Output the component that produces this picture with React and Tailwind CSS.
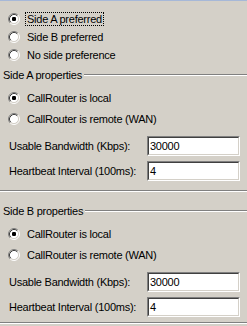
import React from "react";

function Radio({ checked }) {
  return (
    <svg width="12" height="12" viewBox="0 0 12 12" className="shrink-0">
      <circle cx="6" cy="6" r="4.5" fill="#ffffff" />
      <path d="M2.11 9.89 A5.5 5.5 0 0 1 9.89 2.11" fill="none" stroke="#808080" strokeWidth="1" />
      <path d="M2.82 9.18 A4.5 4.5 0 0 1 9.18 2.82" fill="none" stroke="#404040" strokeWidth="1" />
      <path d="M9.89 2.11 A5.5 5.5 0 0 1 2.11 9.89" fill="none" stroke="#ffffff" strokeWidth="1" />
      <path d="M9.18 2.82 A4.5 4.5 0 0 1 2.82 9.18" fill="none" stroke="#d4d0c8" strokeWidth="1" />
      {checked && <rect x="4" y="4" width="4" height="4" rx="1.2" fill="#000000" />}
    </svg>
  );
}

function RadioRow({ checked, focused, label, h }) {
  return (
    <div className={`flex items-center ${h}`}>
      <div className="ml-[8px] mr-[5px] flex">
        <Radio checked={checked} />
      </div>
      <span
        className={`border px-px leading-[12px] ${
          focused ? "border-dotted border-black" : "border-transparent"
        }`}
      >
        {label}
      </span>
    </div>
  );
}

function GroupHeader({ label }) {
  return (
    <div className="flex h-[20px] items-center">
      <span className="ml-[3px] leading-[12px]">{label}</span>
      <div className="ml-[2px] flex flex-1 flex-col">
        <div className="h-px bg-[#808080]" />
        <div className="h-px bg-white" />
      </div>
    </div>
  );
}

function Field({ label, value }) {
  return (
    <div className="flex h-[20px] items-center">
      <span className="ml-[9px] w-[138px] leading-[12px]">{label}</span>
      <div className="h-[20px] w-[93px] border border-t-[#808080] border-l-[#808080] border-b-white border-r-white">
        <div className="flex h-full items-center border border-t-[#404040] border-l-[#404040] border-b-[#d4d0c8] border-r-[#d4d0c8] bg-white pl-[1px] leading-[12px]">
          {value}
        </div>
      </div>
    </div>
  );
}

function Group({ label }) {
  return (
    <div className="flex flex-col">
      <GroupHeader label={label} />
      <div className="pt-[2px]">
        <RadioRow checked label="CallRouter is local" h="h-[21px]" />
        <RadioRow label="CallRouter is remote (WAN)" h="h-[21px]" />
      </div>
      <div className="mt-[7px] flex flex-col gap-[5px]">
        <Field label="Usable Bandwidth (Kbps):" value="30000" />
        <Field label="Heartbeat Interval (100ms):" value="4" />
      </div>
    </div>
  );
}

export default function App() {
  return (
    <div
      className="flex h-[326px] w-[247px] flex-col overflow-hidden bg-[#d4d0c8] text-[11px] tracking-[-0.25px] text-black"
      style={{ fontFamily: '"Liberation Sans", Arial, sans-serif' }}
    >
      <div className="h-px bg-[#a6b8d8]" />
      <div className="mt-[9px] flex flex-col">
        <RadioRow checked focused label="Side A preferred" h="h-[18px]" />
        <RadioRow label="Side B preferred" h="h-[18px]" />
        <RadioRow label="No side preference" h="h-[18px]" />
      </div>
      <div className="mt-px">
        <Group label="Side A properties" />
      </div>
      <div className="mt-[9px] flex flex-col">
        <div className="h-px bg-[#808080]" />
        <div className="h-px bg-white" />
      </div>
      <div className="mt-[9px]">
        <Group label="Side B properties" />
      </div>
      <div className="mt-[5px] flex flex-col">
        <div className="h-px bg-[#808080]" />
        <div className="h-px bg-white" />
      </div>
    </div>
  );
}
